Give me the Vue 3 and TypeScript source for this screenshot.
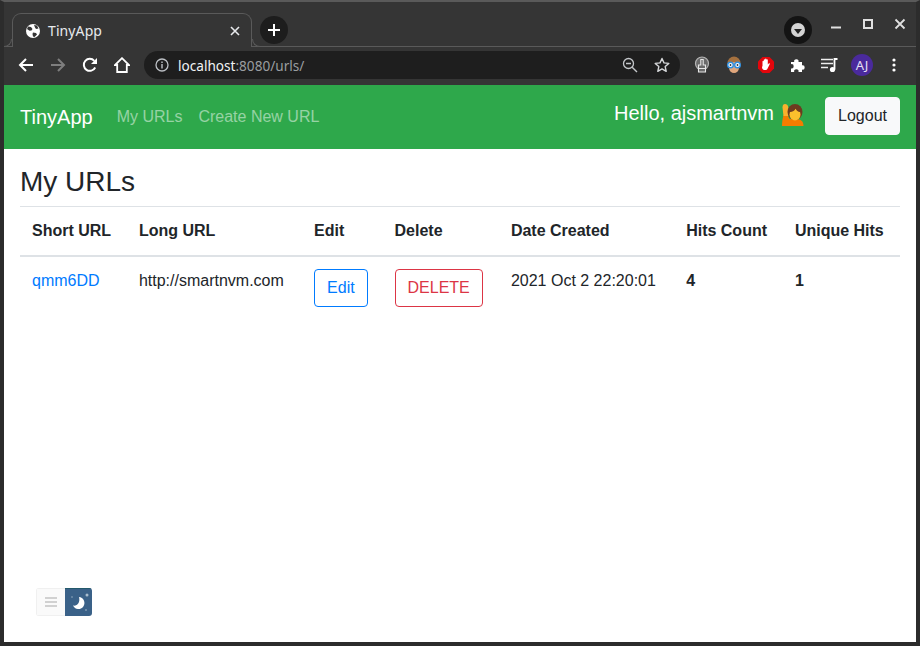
<script setup lang="ts">
const rows = [
  {
    short: 'qmm6DD',
    long: 'http://smartnvm.com',
    date: '2021 Oct 2 22:20:01',
    hits: 4,
    unique: 1,
  },
]
const headers = ['Short URL', 'Long URL', 'Edit', 'Delete', 'Date Created', 'Hits Count', 'Unique Hits']
</script>

<template>
  <div class="window">
    <div class="tabstrip">
      <div class="tab">
        <svg class="globe" width="16" height="16" viewBox="0 0 16 16">
          <circle cx="8" cy="8" r="7" fill="#fff" />
          <path d="M3 3.500l3 .5 1.500 2-1 1.500-2 .3L2 6zM9 2l3 .5 1.500 3-2.500.5-1-1.500zM8 9.500l3 .5 1 1.500-2.500 2.500-1.500-.5-.5-2.500z" fill="#353535" />
        </svg>
        <span class="tab-title">TinyApp</span>
        <svg class="tab-close" width="10" height="10" viewBox="0 0 10 10">
          <path d="M1 1l8 8M9 1l-8 8" stroke="#e8eaed" stroke-width="1.600" />
        </svg>
      </div>
      <div class="new-tab">
        <svg width="14" height="14" viewBox="0 0 14 14">
          <path d="M7 1v12M1 7h12" stroke="#fff" stroke-width="2" />
        </svg>
      </div>
      <div class="strip-right">
        <div class="media-btn">
          <span class="media-dot"><i class="media-arrow"></i></span>
        </div>
        <div class="win-btn">
          <svg width="12" height="12" viewBox="0 0 12 12"><path d="M1 9.500h10" stroke="#e0e0e0" stroke-width="2" /></svg>
        </div>
        <div class="win-btn">
          <svg width="12" height="12" viewBox="0 0 12 12"><rect x="2" y="2" width="8" height="8" fill="none" stroke="#e0e0e0" stroke-width="2" /></svg>
        </div>
        <div class="win-btn">
          <svg width="12" height="12" viewBox="0 0 12 12"><path d="M1.500 1.500l9 9M10.500 1.500l-9 9" stroke="#e0e0e0" stroke-width="1.800" /></svg>
        </div>
      </div>
    </div>

    <div class="toolbar">
      <div class="tool">
        <svg width="16" height="16" viewBox="0 0 16 16"><path d="M15 8H2M8 2L2 8l6 6" fill="none" stroke="#fff" stroke-width="2" /></svg>
      </div>
      <div class="tool">
        <svg width="16" height="16" viewBox="0 0 16 16"><path d="M1 8h13M8 2l6 6-6 6" fill="none" stroke="#7e7e7e" stroke-width="2" /></svg>
      </div>
      <div class="tool">
        <svg width="16" height="16" viewBox="0 0 16 16"><path d="M13.200 10.500A6 6 0 1 1 12.300 3.800" fill="none" stroke="#fff" stroke-width="2" /><path d="M15 1v6H9z" fill="#fff" /></svg>
      </div>
      <div class="tool">
        <svg width="16" height="16" viewBox="0 0 16 16"><path d="M8 1.200L1 8h2.200v7h9.600V8H15z" fill="none" stroke="#fff" stroke-width="1.800" /></svg>
      </div>
      <div class="omnibox">
        <svg class="info" width="14" height="14" viewBox="0 0 14 14">
          <circle cx="7" cy="7" r="6" fill="none" stroke="#bdc1c6" stroke-width="1.300" />
          <path d="M7 6v4.500M7 3.500v1.500" stroke="#bdc1c6" stroke-width="1.400" />
        </svg>
        <span class="url"><span class="host">localhost</span>:8080/urls/</span>
        <svg class="zoom-icon" width="16" height="16" viewBox="0 0 16 16">
          <circle cx="6.500" cy="6.500" r="5" fill="none" stroke="#c4c7ca" stroke-width="1.300" />
          <path d="M4 6.500h5M10.200 10.200L15 15" stroke="#c4c7ca" stroke-width="1.400" />
        </svg>
        <svg class="star" width="16" height="16" viewBox="0 0 16 16">
          <path d="M8 1.500l2 4.400 4.800.5-3.600 3.200 1 4.700L8 11.900l-4.200 2.400 1-4.700L1.200 6.400 6 5.900z" fill="none" stroke="#d6d8da" stroke-width="1.400" stroke-linejoin="round" />
        </svg>
      </div>
      <div class="tool tool-first">
        <svg width="18" height="18" viewBox="0 0 18 18">
          <circle cx="9" cy="7.500" r="6.500" fill="#6a6a6a" stroke="#b5b5b5" stroke-width="1.200" />
          <path d="M7.800 3.500h2.400v5.500h2.300v7h-7V9h2.300z" fill="#6a6a6a" stroke="#e6e6e6" stroke-width="1.100" />
          <path d="M6 12.500h6" stroke="#e6e6e6" stroke-width="1" />
        </svg>
      </div>
      <div class="tool">
        <svg width="18" height="18" viewBox="0 0 18 18">
          <ellipse cx="9" cy="7" rx="6.500" ry="6.500" fill="#a5713f" />
          <ellipse cx="9" cy="11.500" rx="5" ry="5.500" fill="#e0a67c" />
          <circle cx="5.500" cy="9" r="2.800" fill="#fff" stroke="#2f8fe0" stroke-width="1.400" />
          <circle cx="12.500" cy="9" r="2.800" fill="#fff" stroke="#2f8fe0" stroke-width="1.400" />
          <circle cx="5.500" cy="9" r=".9" fill="#333" />
          <circle cx="12.500" cy="9" r=".9" fill="#333" />
        </svg>
      </div>
      <div class="tool">
        <svg width="18" height="18" viewBox="0 0 18 18">
          <path d="M5.500 1h7L17 5.500v7L12.500 17h-7L1 12.500v-7z" fill="#e3060c" />
          <path d="M5.500 10V5.500c0-1 1.300-1 1.300 0V4c0-1 1.300-1 1.300 0v-.7c0-1 1.400-1 1.400 0V4c0-1 1.300-1 1.300 0v4.500l.9-1c.7-.7 1.500 0 1 .8l-2.100 4.200c-.5 1-1.300 1.600-2.400 1.600-2 0-3.200-1.300-3.200-3.200z" fill="#fff" />
        </svg>
      </div>
      <div class="tool">
        <svg width="16" height="16" viewBox="0 0 16 16">
          <path d="M1 5h3.200a2.200 2.200 0 1 1 4.300 0H12v3.300a2.200 2.200 0 1 1 0 4.300V15H8.500a2.200 2.200 0 1 0-4.300 0H1v-3.500a2.200 2.200 0 1 0 0-4.300z" fill="#fff" />
        </svg>
      </div>
      <div class="tool">
        <svg width="18" height="16" viewBox="0 0 18 16">
          <path d="M0 2.500h12M0 6.500h12M0 10.500h7" stroke="#eee" stroke-width="1.600" />
          <path d="M13.500 12.500V2h3" fill="none" stroke="#fff" stroke-width="1.800" />
          <circle cx="11.500" cy="12.500" r="2.600" fill="#fff" />
        </svg>
      </div>
      <div class="tool">
        <span class="profile">AJ</span>
      </div>
      <div class="tool">
        <svg width="4" height="14" viewBox="0 0 4 14">
          <circle cx="2" cy="2" r="1.600" fill="#fff" />
          <circle cx="2" cy="7" r="1.600" fill="#fff" />
          <circle cx="2" cy="12" r="1.600" fill="#fff" />
        </svg>
      </div>
    </div>

    <div class="page">
      <nav class="navbar">
        <a class="brand">TinyApp</a>
        <a class="nav-link">My URLs</a>
        <a class="nav-link">Create New URL</a>
        <div class="nav-right">
          <span class="hello">Hello, ajsmartnvm</span>
          <svg class="person" width="22" height="23" viewBox="0 0 22 23">
            <path d="M0 23c0-4 .5-7 1.500-11h4l2 4h7c4 0 7 2 7 7z" fill="#f57c00" />
            <path d="M1.500 13L.5 4.500C.5 2 1.500 1 3 1s3 1 3.200 3l.5 9z" fill="#fbb02d" />
            <ellipse cx="13" cy="9" rx="7.500" ry="8" fill="#6d3b20" />
            <ellipse cx="13" cy="11.500" rx="5.500" ry="6" fill="#fbc02d" />
            <path d="M8 9c2.500 0 5-1.500 5.500-3.500C14.500 7.500 16 9 18 9l.5-4-3-3h-5L7.500 4.500z" fill="#6d3b20" />
          </svg>
          <button class="logout">Logout</button>
        </div>
      </nav>

      <main class="content">
        <h3 class="title">My URLs</h3>
        <table class="table">
          <thead>
            <tr>
              <th v-for="h in headers" :key="h">{{ h }}</th>
            </tr>
          </thead>
          <tbody>
            <tr v-for="row in rows" :key="row.short">
              <td><a class="link">{{ row.short }}</a></td>
              <td>{{ row.long }}</td>
              <td><button class="btn btn-edit">Edit</button></td>
              <td><button class="btn btn-delete">DELETE</button></td>
              <td>{{ row.date }}</td>
              <td><strong>{{ row.hits }}</strong></td>
              <td><strong>{{ row.unique }}</strong></td>
            </tr>
          </tbody>
        </table>
      </main>

      <div class="float-widget">
        <div class="widget-menu">
          <svg width="12" height="10" viewBox="0 0 12 10"><path d="M0 1h12M0 5h12M0 9h12" stroke="#c4c4c4" stroke-width="1.400" /></svg>
        </div>
        <div class="widget-moon">
          <svg width="27" height="28" viewBox="0 0 27 28">
            <path d="M14 8a6 6 0 1 1-6 8.500c4 1 7.500-3 6-8.500z" fill="#fff" />
            <circle cx="22" cy="6" r="1.500" fill="#a9bccd" />
            <circle cx="7" cy="8" r=".7" fill="#a9bccd" />
            <circle cx="21" cy="21" r=".7" fill="#c6d3de" />
          </svg>
        </div>
      </div>
    </div>
  </div>
</template>

<style scoped>
.window {
  position: relative;
  box-sizing: border-box;
  width: 920px;
  height: 646px;
  display: flex;
  flex-direction: column;
  background: #353535;
  border: solid #2c2c2c;
  border-width: 2px 4px 4px;
  border-top-color: #5a5a5a;
  overflow: hidden;
}

.tabstrip {
  height: 44px;
  display: flex;
  align-items: flex-end;
  padding-left: 8px;
  border-bottom: 1px solid #5a5a5a;
  box-sizing: content-box;
  font-family: "Noto Sans", sans-serif;
}
.tab {
  position: relative;
  box-sizing: border-box;
  width: 240px;
  height: 34px;
  margin-bottom: -1px;
  display: flex;
  align-items: center;
  padding: 0 11px 0 12px;
  background: #353535;
  border: 1px solid #5a5a5a;
  border-bottom: 0;
  border-radius: 9px 9px 0 0;
  color: #e8eaed;
  font-size: 13px;
}
/* curved feet at the bottom corners of the active tab */
.tab::before,
.tab::after {
  content: '';
  position: absolute;
  bottom: 0;
  width: 8px;
  height: 8px;
  box-sizing: border-box;
  background: #353535;
  border-bottom: 1px solid #5a5a5a;
}
.tab::before {
  left: -9px;
  border-right: 1px solid #5a5a5a;
  border-bottom-right-radius: 8px;
}
.tab::after {
  right: -9px;
  border-left: 1px solid #5a5a5a;
  border-bottom-left-radius: 8px;
}
.globe {
  flex: none;
}
.tab-title {
  margin-left: 7px;
  flex: 1;
  font-size: 14px;
  letter-spacing: 0.1px;
}
.new-tab {
  position: relative;
  width: 28px;
  height: 28px;
  margin: 0 0 2px 8px;
  border-radius: 50%;
  background: #1d1d1d;
  display: flex;
  align-items: center;
  justify-content: center;
}
.strip-right {
  margin-left: auto;
  display: flex;
  height: 44px;
  align-items: flex-start;
}
.media-btn {
  width: 28px;
  height: 28px;
  margin: 14px 8px 0 0;
  border-radius: 50%;
  background: #141414;
  display: flex;
  align-items: center;
  justify-content: center;
}
.media-dot {
  width: 14px;
  height: 14px;
  border-radius: 50%;
  background: #d4d4d4;
  display: flex;
  align-items: center;
  justify-content: center;
}
.media-arrow {
  display: block;
  margin-top: 2px;
  border-style: solid;
  border-width: 5px 4px 0;
  border-color: #222 transparent transparent;
}
.win-btn {
  width: 32px;
  height: 44px;
  display: flex;
  align-items: center;
  justify-content: center;
}

.toolbar {
  height: 38px;
  box-sizing: border-box;
  display: flex;
  align-items: center;
  padding: 0 0 2px 6px;
  flex: none;
}
.tool {
  width: 32px;
  height: 32px;
  flex: none;
  display: flex;
  align-items: center;
  justify-content: center;
}
.tool-first {
  margin-left: 6px;
}
.omnibox {
  box-sizing: border-box;
  width: 536px;
  height: 28px;
  margin-left: 6px;
  display: flex;
  align-items: center;
  padding: 0 10px 0 11px;
  border-radius: 14px;
  background: #1e1e1e;
  font-family: "Noto Sans", sans-serif;
  font-size: 13.6px;
  color: #9a9da0;
}
.url {
  margin-left: 9px;
  flex: 1;
}
.host {
  color: #f1f3f4;
}
.star {
  margin-left: 16px;
}
.profile {
  width: 22px;
  height: 22px;
  border-radius: 50%;
  background: #4a2a9c;
  color: #e6e0f5;
  font-family: "Noto Sans", sans-serif;
  font-size: 13px;
  display: flex;
  align-items: center;
  justify-content: center;
}

.page {
  position: relative;
  flex: 1;
  background: #fff;
  font-family: "Liberation Sans", Arial, sans-serif;
  font-size: 16px;
  line-height: 1.5;
  color: #212529;
}
.navbar {
  height: 64px;
  box-sizing: border-box;
  display: flex;
  align-items: center;
  padding: 0 16px;
  background: #2ea84b;
}
.brand {
  font-size: 20px;
  color: #fff;
  margin-right: 24px;
}
.nav-link {
  color: rgba(255, 255, 255, 0.5);
  margin-right: 16px;
  white-space: nowrap;
}
.nav-right {
  margin-left: auto;
  display: flex;
  align-items: center;
}
.hello {
  font-size: 20px;
  color: #fff;
  margin-top: -8px;
}
.person {
  margin: -6px 0 0 8px;
}
.logout {
  margin: -2px 0 0 21px;
  width: 75px;
  height: 38px;
  padding: 0;
  border: 1px solid #f8f9fa;
  border-radius: 4px;
  background: #f8f9fa;
  color: #212529;
  font: inherit;
}

.content {
  padding: 0 16px;
}
.title {
  margin: 0;
  padding: 16px 0 7px;
  font-size: 28px;
  font-weight: 500;
  line-height: 34px;
}
.table {
  width: 100%;
  border-collapse: collapse;
}
.table th,
.table td {
  padding: 12px;
  text-align: left;
  vertical-align: top;
  border-top: 1px solid #dee2e6;
}
.table th {
  font-weight: 700;
  vertical-align: bottom;
  border-bottom: 2px solid #dee2e6;
}
.table td {
  border-top: 0;
}
.link {
  color: #007bff;
}
.btn {
  height: 38px;
  padding: 0 12px;
  border-radius: 4px;
  background: transparent;
  font: inherit;
}
.btn-edit {
  color: #007bff;
  border: 1px solid #007bff;
}
.btn-delete {
  color: #dc3545;
  border: 1px solid #dc3545;
}

.float-widget {
  position: absolute;
  left: 32px;
  top: 503px;
  display: flex;
  width: 56px;
  height: 28px;
  border-radius: 3px;
  overflow: hidden;
}
.widget-menu {
  width: 29px;
  background: #fafafa;
  border: 1px solid #f0f0f0;
  border-right: 0;
  box-sizing: border-box;
  display: flex;
  align-items: center;
  justify-content: center;
}
.widget-moon {
  width: 27px;
  background: #3a6188;
  border-top: 1px solid #24596b;
  box-sizing: border-box;
}
</style>
